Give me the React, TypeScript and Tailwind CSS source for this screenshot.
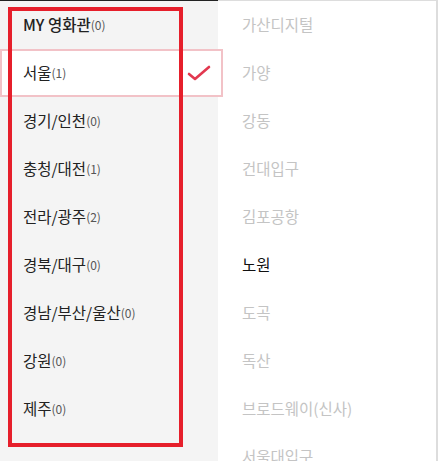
const regions = [
  { name: "MY 영화관", count: 0, strong: true },
  { name: "서울", count: 1, selected: true },
  { name: "경기/인천", count: 0 },
  { name: "충청/대전", count: 1 },
  { name: "전라/광주", count: 2 },
  { name: "경북/대구", count: 0 },
  { name: "경남/부산/울산", count: 0 },
  { name: "강원", count: 0 },
  { name: "제주", count: 0 },
];

const theaters = [
  "가산디지털",
  "가양",
  "강동",
  "건대입구",
  "김포공항",
  "노원",
  "도곡",
  "독산",
  "브로드웨이(신사)",
  "서울대입구",
];

export default function App() {
  return (
    <div
      className="relative flex w-[438px] h-[461px] overflow-hidden bg-white"
      style={{ fontFamily: '"Noto Sans CJK KR", "Noto Sans", sans-serif' }}
    >
      {/* region list */}
      <div className="w-[218px] shrink-0 bg-[#f4f4f4] border-t border-[#222]">
        {regions.map((r) =>
          r.selected ? (
            <div
              key={r.name}
              className="relative z-10 flex items-center w-[223px] h-[48px] pl-[21px] pr-[10px] bg-white border-2 border-[#f2c2c7]"
            >
              <span className="text-[15.5px] text-[#222]">{r.name}</span>
              <span className="text-[12px] text-[#555]">({r.count})</span>
              <svg className="ml-auto" width="24" height="16" viewBox="0 0 24 16" fill="none">
                <path d="M2 9 L8 14 L22 2" stroke="#e2384f" strokeWidth="2.6" strokeLinecap="round" strokeLinejoin="round" />
              </svg>
            </div>
          ) : (
            <div key={r.name} className="flex items-center h-[48px] pl-[23px]">
              <span className={`text-[15.5px] text-[#222] ${r.strong ? "font-medium" : ""}`}>{r.name}</span>
              <span className="text-[12px] text-[#555]">({r.count})</span>
            </div>
          )
        )}
      </div>

      {/* theater list */}
      <div className="flex-1 border-t border-r-2 border-[#ddd]">
        {theaters.map((t) => (
          <div key={t} className="flex items-center h-[48px] pl-[24px]">
            <span className={`text-[15.5px] ${t === "노원" ? "text-[#111]" : "text-[#c4c4c4]"}`}>{t}</span>
          </div>
        ))}
      </div>

      {/* annotation box */}
      <div className="absolute left-[8px] top-[7px] w-[175px] h-[440px] border-[4px] border-[#e61f2b] z-20 pointer-events-none" />
    </div>
  );
}
